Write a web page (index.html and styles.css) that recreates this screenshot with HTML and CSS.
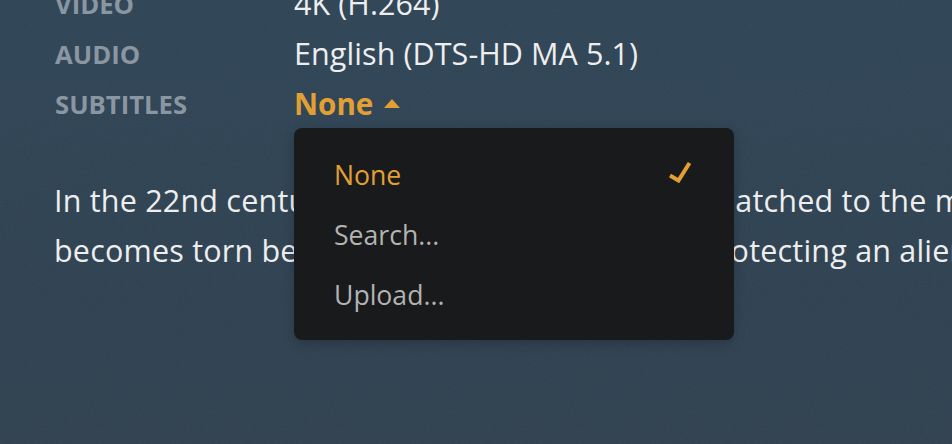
FILE: index.html
```html
<!DOCTYPE html>
<html lang="en">
<head>
    <meta charset="UTF-8">
    <title>Avatar</title>
    <meta name="viewport" content="width=device-width, initial-scale=1.0">
    <link rel="stylesheet" href="styles.css">
</head>
<body>
    <main class="details">
        <div class="media-rows">
            <div class="media-label">Video</div>
            <div class="media-value">4K (H.264)</div>
            <div class="media-label">Audio</div>
            <div class="media-value">English (DTS-HD MA 5.1)</div>
            <div class="media-label">Subtitles</div>
            <div class="media-value picker">
                <span class="picker-toggle">None <span class="caret-up"></span></span>
                <!-- Subtitle dropdown -->
                <ul class="picker-menu">
                    <li class="picker-item selected">
                        None
                        <svg class="check" width="26" height="26" viewBox="0 0 26 26" aria-hidden="true">
                            <path d="M2 13.5 L10.5 18.5 L21.5 1" fill="none" stroke="#e2a033" stroke-width="4"/>
                        </svg>
                    </li>
                    <li class="picker-item">Search...</li>
                    <li class="picker-item">Upload...</li>
                </ul>
            </div>
        </div>
        <p class="summary">In the 22nd century, a paraplegic Marine is dispatched to the moon Pandora on a unique mission, but<br>becomes torn between following orders and protecting an alien civilization.</p>
    </main>
</body>
</html>
```

FILE: styles.css
```css
html, body {
    height: 100%;
}
body {
    margin: 0;
    overflow: hidden;
    font-family: "Open Sans", sans-serif;
    color: #eee;
    background-color: #344757;
    /* faint grain over the backdrop gradient */
    background-image:
        url("data:image/svg+xml,%3Csvg xmlns='http://www.w3.org/2000/svg' width='240' height='240'%3E%3Cfilter id='n'%3E%3CfeTurbulence type='fractalNoise' baseFrequency='0.7' numOctaves='2'/%3E%3CfeColorMatrix values='0 0 0 0 0 0 0 0 0 0 0 0 0 0 0 0.5 0 0 0 0'/%3E%3C/filter%3E%3Crect width='240' height='240' filter='url(%23n)' opacity='0.22'/%3E%3C/svg%3E"),
        linear-gradient(180deg, #354c5e 0%, #35495a 55%, #374857 100%);
}
.details {
    width: 1400px;
    margin-top: -22px;
    padding-left: 54px;
}
.media-rows {
    display: grid;
    grid-template-columns: 240px 1fr;
    grid-auto-rows: 50px;
    align-items: center;
}
.media-label {
    padding: 2px 0 0 1px;
    font-size: 25.7px;
    font-weight: 700;
    text-transform: uppercase;
    color: #8a96a1;
}
.media-value {
    font-size: 30.5px;
    letter-spacing: 0.08px;
}
.picker {
    position: relative;
}
.picker-toggle {
    display: inline-flex;
    align-items: center;
    gap: 11px;
    color: #e2a033;
    font-weight: 700;
    font-size: 29.6px;
    letter-spacing: 0;
}
.caret-up {
    width: 0;
    height: 0;
    border-left: 8px solid transparent;
    border-right: 8px solid transparent;
    border-bottom: 9px solid #e2a033;
}
.picker-menu {
    position: absolute;
    top: 46px;
    left: 0;
    z-index: 10;
    width: 440px;
    box-sizing: border-box;
    margin: 0;
    padding: 17px 0 15px;
    list-style: none;
    background: #191a1c;
    border-radius: 8px;
    box-shadow: 0 4px 12px rgba(0,0,0,0.2);
}
.picker-item {
    display: flex;
    align-items: center;
    justify-content: space-between;
    height: 60px;
    padding: 0 40px;
    font-size: 26.6px;
    letter-spacing: 0;
    color: #b3b3b3;
}
.picker-item.selected {
    color: #e2a033;
}
.summary {
    margin: 47px 0 0;
    font-size: 30.5px;
    line-height: 50px;
    letter-spacing: 0.2px;
    white-space: nowrap;
    color: #eee;
}
```
